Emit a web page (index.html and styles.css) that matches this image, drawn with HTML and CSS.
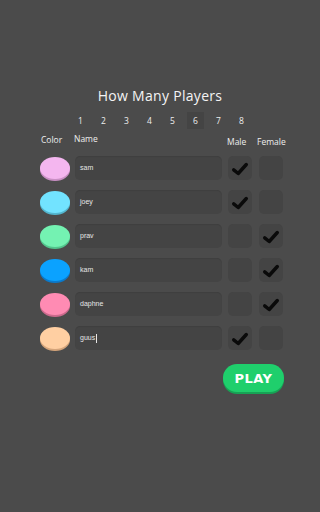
FILE: index.html
```html
<!DOCTYPE html>
<html>
<head>
<meta charset="utf-8">
<link rel="stylesheet" href="styles.css">
</head>
<body>
<div class="page">
  <h1 class="title">How Many Players</h1>
  <div class="counts">
    <span class="n">1</span><span class="n">2</span><span class="n">3</span><span class="n">4</span><span class="n">5</span><span class="n sel">6</span><span class="n">7</span><span class="n">8</span>
  </div>
  <div class="table">
    <div class="head">
      <span class="h-color">Color</span>
      <span class="h-name">Name</span>
      <span class="h-male">Male</span>
      <span class="h-female">Female</span>
    </div>
    <div class="row">
      <span class="dot" style="background:#f4b6ef;--sh:#c98fc4"></span>
      <div class="input">sam</div>
      <div class="box"><svg class="chk" viewBox="0 0 20 20"><path d="M3 11 L8 15 L17 5"/></svg></div>
      <div class="box"></div>
    </div>
    <div class="row">
      <span class="dot" style="background:#72e3ff;--sh:#53b6cf"></span>
      <div class="input">joey</div>
      <div class="box"><svg class="chk" viewBox="0 0 20 20"><path d="M3 11 L8 15 L17 5"/></svg></div>
      <div class="box"></div>
    </div>
    <div class="row">
      <span class="dot" style="background:#74f2b2;--sh:#52c48c"></span>
      <div class="input">prav</div>
      <div class="box"></div>
      <div class="box"><svg class="chk" viewBox="0 0 20 20"><path d="M3 11 L8 15 L17 5"/></svg></div>
    </div>
    <div class="row">
      <span class="dot" style="background:#0ba2ff;--sh:#0a7acc"></span>
      <div class="input">kam</div>
      <div class="box"></div>
      <div class="box"><svg class="chk" viewBox="0 0 20 20"><path d="M3 11 L8 15 L17 5"/></svg></div>
    </div>
    <div class="row">
      <span class="dot" style="background:#ff8bb3;--sh:#cc6a8d"></span>
      <div class="input">daphne</div>
      <div class="box"></div>
      <div class="box"><svg class="chk" viewBox="0 0 20 20"><path d="M3 11 L8 15 L17 5"/></svg></div>
    </div>
    <div class="row">
      <span class="dot" style="background:#ffcfa2;--sh:#d4a47a"></span>
      <div class="input">guus<span class="caret"></span></div>
      <div class="box"><svg class="chk" viewBox="0 0 20 20"><path d="M3 11 L8 15 L17 5"/></svg></div>
      <div class="box"></div>
    </div>
  </div>
  <div class="actions">
    <button class="play">PLAY</button>
  </div>
</div>
</body>
</html>
```
FILE: styles.css
```css
html, body {
  margin: 0;
  padding: 0;
  background: #4b4b4b;
  height: 100%;
}
body {
  font-family: "Open Sans", "Noto Sans", sans-serif;
  color: #f2f2f2;
}
.page {
  width: 320px;
  height: 512px;
  padding-top: 86px;
  box-sizing: border-box;
}
.title {
  margin: 0;
  text-align: center;
  font-size: 14px;
  font-weight: 500;
  line-height: 20px;
  letter-spacing: 0.3px;
  color: #f4f4f4;
}
.counts {
  display: flex;
  padding-left: 72px;
  margin-top: 6px;
  height: 17px;
}
.n {
  width: 17px;
  margin-right: 6px;
  text-align: center;
  font-size: 8.5px;
  line-height: 17px;
  font-weight: 500;
  color: #eeeeee;
}
.sel {
  background: #444444;
}
.table {
  margin-left: 40px;
  width: 250px;
}
.head {
  position: relative;
  height: 20px;
  margin-top: 2px;
  font-size: 8.5px;
  font-weight: 500;
  color: #eeeeee;
}
.head span {
  position: absolute;
}
.h-color { left: 1px; top: 3px; }
.h-name { left: 34px; top: 2px; }
.h-male { left: 187px; top: 5px; }
.h-female { left: 217px; top: 5px; }
.row {
  display: flex;
  align-items: center;
  height: 34px;
}
.dot {
  width: 30px;
  height: 22px;
  border-radius: 50%;
  box-shadow: 0 2px 0 var(--sh);
  margin-top: -1px;
  flex: none;
}
.input {
  margin-left: 5px;
  width: 147px;
  height: 24px;
  border-radius: 5px;
  background: #444444;
  box-shadow: inset 0 1px 1px rgba(0,0,0,0.08);
  font-family: "Liberation Sans", Arial, sans-serif;
  font-size: 7px;
  line-height: 24px;
  padding-left: 5px;
  box-sizing: border-box;
  color: #e6e6e6;
  display: flex;
  align-items: center;
}
.caret {
  display: inline-block;
  width: 1px;
  height: 9px;
  background: #e6e6e6;
  margin-left: 0.5px;
}
.box {
  width: 24px;
  height: 24px;
  border-radius: 5px;
  background: #444444;
  margin-left: 6px;
  flex: none;
  display: flex;
  align-items: center;
  justify-content: center;
}
.row .box:nth-of-type(3) { margin-left: 7px; }
.chk {
  width: 18px;
  height: 18px;
  margin-top: 2px;
}
.chk path {
  fill: none;
  stroke: #0a0a0a;
  stroke-width: 3.8;
  stroke-linecap: round;
  stroke-linejoin: round;
}
.actions {
  display: flex;
  justify-content: flex-end;
  padding-right: 36px;
  margin-top: 9px;
}
.play {
  width: 61px;
  height: 28px;
  border: none;
  border-radius: 14px;
  background: #1fcf6c;
  box-shadow: 0 2px 0 #17a355;
  color: #ffffff;
  font-family: "DejaVu Sans", sans-serif;
  font-weight: 900;
  font-size: 13px;
  letter-spacing: 0.5px;
  padding: 0;
}
```
